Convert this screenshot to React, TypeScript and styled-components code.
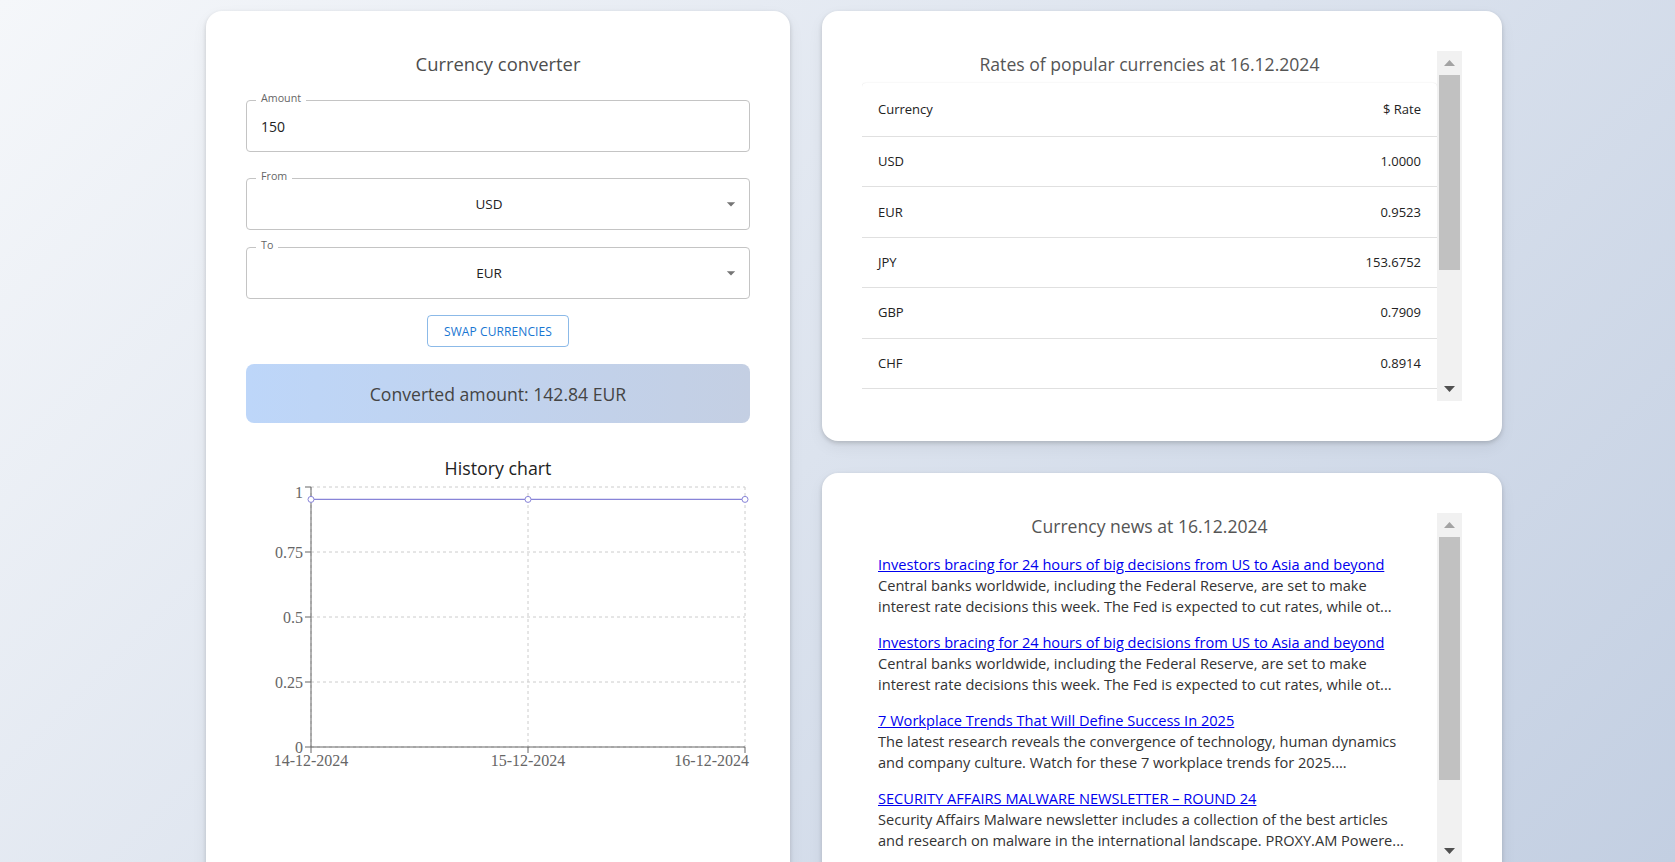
import React from "react";
import styled, { createGlobalStyle } from "styled-components";

const GlobalStyle = createGlobalStyle`
  html, body { margin: 0; padding: 0; }
  body { font-family: "Open Sans", "Noto Sans", sans-serif; }
  * { box-sizing: border-box; }
`;

const Page = styled.main`
  height: 100vh;
  overflow: hidden;
  background: linear-gradient(135deg, #f5f7fa 0%, #c3cfe2 100%);
  padding: 11px 0 0 206px;
  display: grid;
  grid-template-columns: 584px 680px;
  column-gap: 32px;
  align-content: start;
  align-items: stretch;
`;

const Card = styled.section`
  background: #fff;
  border-radius: 16px;
  box-shadow: 0 2px 4px rgba(0, 0, 0, 0.16), 0 6px 16px rgba(0, 0, 0, 0.06);
  padding: 40px;
`;

const ConverterCard = styled(Card)`
  display: flex;
  flex-direction: column;
`;

const RightColumn = styled.div`
  display: flex;
  flex-direction: column;
  gap: 32px;
`;

const CardTitle = styled.h2`
  margin: 0 0 24px;
  font-size: 18.4px;
  line-height: 25px;
  font-weight: 400;
  color: #4d4d4d;
  text-align: center;
`;

const Field = styled.div<{ $mt: number }>`
  position: relative;
  height: 52px;
  margin-top: ${(p) => p.$mt}px;
  border: 1px solid #c4c4c4;
  border-radius: 4px;
  display: flex;
  align-items: center;
`;

const FieldLabel = styled.span`
  position: absolute;
  top: -9px;
  left: 9px;
  padding: 0 5px;
  background: #fff;
  font-size: 10.7px;
  line-height: 12px;
  color: #666;
`;

const AmountInput = styled.input`
  width: 100%;
  height: 100%;
  border: none;
  outline: none;
  background: transparent;
  padding: 0 14px;
  font-family: inherit;
  font-size: 14px;
  color: #222;
`;

const SelectValue = styled.div`
  flex: 1;
  padding: 0 4px 0 14px;
  text-align: center;
  font-size: 13.5px;
  color: #222;
`;

const ArrowBox = styled.span`
  width: 20px;
  height: 20px;
  margin-right: 8px;
  display: flex;
  color: #757575;
`;

const SwapButton = styled.button`
  align-self: center;
  margin-top: 16px;
  height: 32px;
  padding: 0 16px;
  border: 1px solid rgba(25, 118, 210, 0.5);
  border-radius: 4px;
  background: transparent;
  color: #1976d2;
  font-family: inherit;
  font-size: 12px;
  font-weight: 500;
  letter-spacing: 0.1px;
  text-transform: uppercase;
  cursor: pointer;
`;

const Result = styled.div`
  margin-top: 17px;
  height: 59px;
  border-radius: 8px;
  background: linear-gradient(90deg, #bdd6f9 0%, #c4cfe3 100%);
  display: flex;
  align-items: center;
  justify-content: center;
  font-size: 17.6px;
  color: #444;
`;

const ChartTitle = styled.h3`
  margin: 32px 0 0;
  font-size: 17.8px;
  line-height: 27px;
  font-weight: 400;
  color: #222;
  text-align: center;
`;

const ChartSvg = styled.svg`
  display: block;
  overflow: visible;
  font-family: "Liberation Serif", "Times New Roman", serif;
  font-size: 16px;
`;

/* scroll panel with a classic-looking scrollbar */
const ScrollFrame = styled.div`
  height: 350px;
  display: flex;
`;

const ScrollContent = styled.div`
  flex: 1;
  min-width: 0;
  overflow: hidden;
`;

const ScrollTrack = styled.div`
  width: 25px;
  flex: none;
  background: #f1f1f1;
  display: flex;
  flex-direction: column;
`;

const ScrollButton = styled.div`
  height: 24px;
  flex: none;
  display: flex;
  align-items: center;
  justify-content: center;
`;

const ScrollRail = styled.div`
  flex: 1;
  padding: 0 2px;
`;

const ScrollThumb = styled.div<{ $size: number }>`
  height: ${(p) => p.$size}px;
  background: #c1c1c1;
`;

const PanelTitle = styled.h2<{ $mb: number }>`
  margin: 0 0 ${(p) => p.$mb}px;
  font-size: 17.6px;
  line-height: 26px;
  font-weight: 400;
  color: #555;
  text-align: center;
`;

const TablePaper = styled.div`
  border-radius: 4px;
  overflow: hidden;
  box-shadow: 0 1px 3px rgba(0, 0, 0, 0.1), 0 0 1px rgba(0, 0, 0, 0.12);
  background: #fff;
`;

const RatesTable = styled.table`
  width: 100%;
  border-collapse: collapse;
`;

const HeadCell = styled.th<{ $right?: boolean }>`
  padding: 16px;
  font-size: 13px;
  line-height: 21px;
  font-weight: 400;
  color: #222;
  text-align: ${(p) => (p.$right ? "right" : "left")};
  border-bottom: 1px solid #e0e0e0;
`;

const BodyCell = styled.td<{ $right?: boolean }>`
  padding: 14.2px 16px;
  font-size: 13px;
  line-height: 21px;
  color: #222;
  text-align: ${(p) => (p.$right ? "right" : "left")};
  border-bottom: 1px solid #e0e0e0;
`;

const NewsList = styled.div`
  padding: 0 24px 0 16px;
`;

const NewsItem = styled.article`
  margin-bottom: 15px;
  font-size: 14.6px;
  line-height: 21px;
`;

const NewsLink = styled.a`
  display: block;
  color: #0000ee;
  text-decoration: underline;
`;

const NewsText = styled.p`
  margin: 0;
  color: #333;
`;

const rates: [string, string][] = [
  ["USD", "1.0000"],
  ["EUR", "0.9523"],
  ["JPY", "153.6752"],
  ["GBP", "0.7909"],
  ["CHF", "0.8914"],
  ["CAD", "1.4237"],
  ["AUD", "1.5712"],
  ["CNY", "7.2801"],
  ["HKD", "7.7751"],
];

const news = [
  {
    title: "Investors bracing for 24 hours of big decisions from US to Asia and beyond",
    text: "Central banks worldwide, including the Federal Reserve, are set to make interest rate decisions this week. The Fed is expected to cut rates, while ot...",
  },
  {
    title: "Investors bracing for 24 hours of big decisions from US to Asia and beyond",
    text: "Central banks worldwide, including the Federal Reserve, are set to make interest rate decisions this week. The Fed is expected to cut rates, while ot...",
  },
  {
    title: "7 Workplace Trends That Will Define Success In 2025",
    text: "The latest research reveals the convergence of technology, human dynamics and company culture. Watch for these 7 workplace trends for 2025....",
  },
  {
    title: "SECURITY AFFAIRS MALWARE NEWSLETTER – ROUND 24",
    text: "Security Affairs Malware newsletter includes a collection of the best articles and research on malware in the international landscape. PROXY.AM Powere...",
  },
  {
    title: "Dollar steadies ahead of a busy week of central bank meetings",
    text: "The dollar held firm on Monday as traders prepared for a week packed with central bank decisions, with the Federal Reserve widely expected to cut...",
  },
];

const DropArrow = () => (
  <ArrowBox>
    <svg width="20" height="20" viewBox="0 0 24 24" fill="currentColor">
      <path d="M7 10l5 5 5-5z" />
    </svg>
  </ArrowBox>
);

const ScrollArrow = ({ up }: { up?: boolean }) => (
  <ScrollButton>
    <svg width="11" height="6" viewBox="0 0 11 6">
      <polygon points={up ? "5.5,0 11,6 0,6" : "0,0 11,0 5.5,6"} fill={up ? "#a3a3a3" : "#505050"} />
    </svg>
  </ScrollButton>
);

const ScrollPanel = ({ thumb, children }: { thumb: number; children: React.ReactNode }) => (
  <ScrollFrame>
    <ScrollContent>{children}</ScrollContent>
    <ScrollTrack>
      <ScrollArrow up />
      <ScrollRail>
        <ScrollThumb $size={thumb} />
      </ScrollRail>
      <ScrollArrow />
    </ScrollTrack>
  </ScrollFrame>
);

const HistoryChart = () => {
  const left = 65;
  const right = 499;
  const top = 5;
  const bottom = 265;
  const ys = [0, 0.25, 0.5, 0.75, 1];
  const xs = [left, 282, right];
  const val = 0.9523;
  const yOf = (v: number) => bottom - v * (bottom - top);
  const vy = yOf(val);
  return (
    <ChartSvg width={504} height={300} viewBox="0 0 504 300">
      {ys.map((v) => (
        <line key={"h" + v} x1={left} x2={right} y1={yOf(v)} y2={yOf(v)} stroke="#ccc" strokeDasharray="3 3" />
      ))}
      {xs.map((x) => (
        <line key={"v" + x} x1={x} x2={x} y1={top} y2={bottom} stroke="#ccc" strokeDasharray="3 3" />
      ))}
      <line x1={left} x2={left} y1={top} y2={bottom} stroke="#666" />
      <line x1={left} x2={right} y1={bottom} y2={bottom} stroke="#666" />
      {ys.map((v) => (
        <g key={"yt" + v}>
          <line x1={left - 6} x2={left} y1={yOf(v)} y2={yOf(v)} stroke="#666" />
          <text x={left - 8} y={yOf(v)} dy={v === 1 ? "0.66em" : "0.355em"} textAnchor="end" fill="#666">
            {v}
          </text>
        </g>
      ))}
      {xs.map((x, i) => (
        <g key={"xt" + x}>
          <line x1={x} x2={x} y1={bottom} y2={bottom + 6} stroke="#666" />
          <text
            x={i === 2 ? 503 : x}
            y={bottom + 8}
            dy="0.71em"
            textAnchor={i === 2 ? "end" : "middle"}
            fill="#666"
          >
            {["14-12-2024", "15-12-2024", "16-12-2024"][i]}
          </text>
        </g>
      ))}
      <line x1={left} x2={right} y1={vy} y2={vy} stroke="#8884d8" strokeWidth={1.3} />
      {xs.map((x) => (
        <circle key={"c" + x} cx={x} cy={vy} r={3} fill="#fff" stroke="#8884d8" />
      ))}
    </ChartSvg>
  );
};

export default function App() {
  return (
    <>
      <GlobalStyle />
      <Page>
        <ConverterCard>
          <CardTitle>Currency converter</CardTitle>
          <Field $mt={0}>
            <FieldLabel>Amount</FieldLabel>
            <AmountInput defaultValue="150" />
          </Field>
          <Field $mt={26}>
            <FieldLabel>From</FieldLabel>
            <SelectValue>USD</SelectValue>
            <DropArrow />
          </Field>
          <Field $mt={17}>
            <FieldLabel>To</FieldLabel>
            <SelectValue>EUR</SelectValue>
            <DropArrow />
          </Field>
          <SwapButton>Swap currencies</SwapButton>
          <Result>Converted amount: 142.84 EUR</Result>
          <ChartTitle>History chart</ChartTitle>
          <HistoryChart />
        </ConverterCard>
        <RightColumn>
          <Card>
            <ScrollPanel thumb={195}>
              <PanelTitle $mb={6}>Rates of popular currencies at 16.12.2024</PanelTitle>
              <TablePaper>
                <RatesTable>
                  <thead>
                    <tr>
                      <HeadCell>Currency</HeadCell>
                      <HeadCell $right>$ Rate</HeadCell>
                    </tr>
                  </thead>
                  <tbody>
                    {rates.map(([c, r]) => (
                      <tr key={c}>
                        <BodyCell>{c}</BodyCell>
                        <BodyCell $right>{r}</BodyCell>
                      </tr>
                    ))}
                  </tbody>
                </RatesTable>
              </TablePaper>
            </ScrollPanel>
          </Card>
          <Card>
            <ScrollPanel thumb={243}>
              <PanelTitle $mb={15}>Currency news at 16.12.2024</PanelTitle>
              <NewsList>
                {news.map((n, i) => (
                  <NewsItem key={i}>
                    <NewsLink href="#">{n.title}</NewsLink>
                    <NewsText>{n.text}</NewsText>
                  </NewsItem>
                ))}
              </NewsList>
            </ScrollPanel>
          </Card>
        </RightColumn>
      </Page>
    </>
  );
}
